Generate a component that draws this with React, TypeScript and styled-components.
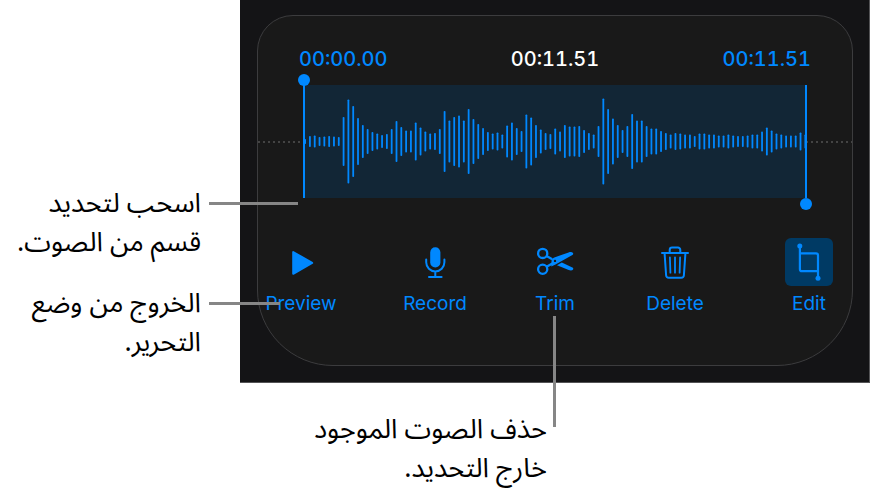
import React from "react";
import styled, { createGlobalStyle } from "styled-components";

const BLUE = "#0088ff";
const LINE = "#868686";

const GlobalStyle = createGlobalStyle`
  *, *::before, *::after { box-sizing: border-box; }
  body {
    margin: 0;
    background: #fff;
    color: #000;
    font-family: Inter, "Liberation Sans", sans-serif;
  }
`;

const Page = styled.main`
  display: grid;
  grid-template-columns: 240px minmax(0, 1fr);
`;

const SideNotes = styled.div`
  display: flex;
  flex-direction: column;
  gap: 22px;
  padding: 184px 39px 0 0;
`;

const Note = styled.p`
  position: relative;
  z-index: 1;
  margin: 0;
  font-family: "Noto Sans Arabic", "Noto Sans", "DejaVu Sans", sans-serif;
  font-size: 27px;
  line-height: 39px;
  text-align: right;
  white-space: nowrap;
`;

const SideNote = styled(Note)<{ $reach: number }>`
  &::after {
    content: "";
    position: absolute;
    top: 18px;
    left: calc(100% + 8px);
    width: ${(p) => p.$reach}px;
    height: 3px;
    background: ${LINE};
  }
`;

const BelowNote = styled(Note)`
  width: 50%;
  margin-top: 27px;
  padding-right: 8px;

  &::after {
    content: "";
    position: absolute;
    left: calc(100% - 2px);
    bottom: 61px;
    width: 3px;
    height: 111px;
    background: ${LINE};
  }
`;

const Screen = styled.section`
  padding: 15px 16px 16px 17px;
  background: #141416;
  border-right: 1px solid #545456;
  border-bottom: 1px solid #545456;
`;

const Panel = styled.div`
  padding: 31px 0 49px;
  background: #191919;
  border: 1px solid #3c3c3e;
  border-radius: 36px 36px 76px 76px;
`;

const Times = styled.div`
  display: flex;
  justify-content: space-between;
  padding: 0 41px;
  font-size: 20px;
  font-weight: 500;
  line-height: 24px;
  font-variant-numeric: tabular-nums;
`;

const Time = styled.time<{ $bright?: boolean }>`
  color: ${(p) => (p.$bright ? "#fff" : BLUE)};
`;

const WaveRow = styled.div`
  display: flex;
  align-items: center;
  height: 113px;
  margin-top: 14px;
`;

const Dots = styled.div`
  width: 46px;
  height: 2px;
  background: repeating-linear-gradient(90deg, #444 0 2px, transparent 2px 5px);
`;

const Selection = styled.div`
  position: relative;
  flex: 1;
  height: 100%;
  background: #122636;
`;

const Wave = styled.svg`
  display: block;
  width: 100%;
  height: 100%;
`;

const Handle = styled.button<{ $end?: boolean }>`
  position: absolute;
  top: 0;
  bottom: 0;
  ${(p) => (p.$end ? "right: -1px;" : "left: -1px;")}
  width: 2px;
  padding: 0;
  border: 0;
  background: ${BLUE};

  &::after {
    content: "";
    position: absolute;
    ${(p) => (p.$end ? "bottom: -12px;" : "top: -11px;")}
    left: -5px;
    width: 12px;
    height: 12px;
    border-radius: 50%;
    background: ${BLUE};
  }
`;

const Toolbar = styled.div`
  display: grid;
  grid-template-columns: 72px minmax(0, 1fr) 72px;
  column-gap: 38px;
  margin-top: 40px;
  padding: 0 7px;
`;

const MiddleTools = styled.div`
  display: grid;
  grid-template-columns: repeat(3, 1fr);
`;

const Tool = styled.button`
  display: flex;
  flex-direction: column;
  align-items: center;
  gap: 6px;
  padding: 0;
  border: 0;
  background: none;
  color: ${BLUE};
  font: inherit;
  font-size: 19px;
  line-height: 24px;
`;

const IconBox = styled.span<{ $on?: boolean }>`
  display: block;
  width: 48px;
  height: 48px;
  border-radius: 6px;
  background: ${(p) => (p.$on ? "#003a64" : "none")};

  svg { display: block; }
`;

const HEIGHTS = [
  5, 11, 12, 9, 10, 11, 10, 9, 49, 84, 71, 47, 33, 25, 19, 16, 13, 15, 25, 41,
  29, 22, 22, 38, 28, 20, 16, 17, 25, 61, 42, 49, 52, 42, 65, 45, 35, 27, 19,
  16, 18, 14, 32, 38, 27, 21, 54, 48, 33, 24, 17, 15, 26, 20, 33, 30, 30, 31,
  23, 17, 14, 31, 86, 65, 46, 33, 23, 31, 55, 42, 42, 31, 26, 26, 21, 17, 14,
  17, 16, 14, 14, 11, 16, 16, 14, 14, 12, 12, 14, 12, 11, 11, 12, 14, 14, 20,
  28, 22, 16, 14, 12, 12, 12, 18, 14,
];

const STEP = 4.81;

const Icon = ({ children }: { children: React.ReactNode }) => (
  <svg width="48" height="48" viewBox="0 0 48 48" fill="none" stroke="currentColor" strokeWidth="2" aria-hidden="true">
    {children}
  </svg>
);

const PlayIcon = () => (
  <Icon>
    <path d="M16.2 14v21.8L35.2 24.9z" fill="currentColor" strokeLinejoin="round" />
  </Icon>
);

const MicIcon = () => (
  <Icon>
    <rect x="19.2" y="9.3" width="10.2" height="20.2" rx="5.1" fill="currentColor" stroke="none" />
    <path d="M15.2 21.5v2.8a9.1 9.1 0 0 0 18.2 0v-2.8M24.3 33.4V39M18 39h12.6" strokeLinecap="round" />
  </Icon>
);

const ScissorsIcon = () => (
  <Icon>
    <g strokeWidth="2.3">
      <circle cx="11.7" cy="15.4" r="4.6" />
      <circle cx="11.7" cy="31.3" r="4.6" />
      <path d="M15.6 18l5.6 3.2M15.6 28.8l7-4" />
    </g>
    <path
      d="M20.6 22.2c.4-1.6 1.6-2.3 3.4-3L37.6 14.4c1.8-.6 3.6-.5 4.4.6.4.7.2 1.5-.6 1.9L24.5 26.6l-4.2 1.8z"
      fill="currentColor"
      stroke="none"
    />
    <path
      d="M26 27.2l4.8-2.8L41.4 29.5c.8.4 1.1 1.2.7 1.9-.8 1.1-2.6 1.3-4.4.6z"
      fill="currentColor"
      stroke="none"
    />
    <circle cx="24" cy="22.9" r="1.2" fill="#191919" stroke="none" />
  </Icon>
);

const TrashIcon = () => (
  <Icon>
    <path d="M11 15.1h26" strokeLinecap="round" />
    <path d="M18.7 15v-3a2.4 2.4 0 0 1 2.4-2.4h5.8a2.4 2.4 0 0 1 2.4 2.4v3" />
    <path d="M13.6 15.5l1.5 21.7a2.7 2.7 0 0 0 2.7 2.5h12.4a2.7 2.7 0 0 0 2.7-2.5l1.5-21.7" />
    <path d="M18.9 19.3l.5 15.4M24 19.3v15.4M29.1 19.3l-.5 15.4" strokeWidth="1.8" strokeLinecap="round" />
  </Icon>
);

const CropIcon = () => (
  <Icon>
    <circle cx="14.8" cy="8.1" r="2.5" fill="currentColor" stroke="none" />
    <circle cx="33" cy="40.2" r="2.5" fill="currentColor" stroke="none" />
    <path d="M14.9 8v23.2a2 2 0 0 0 2 2H33M15 15.4h16a2 2 0 0 1 2 2V40" strokeWidth="2.2" />
  </Icon>
);

const App = () => (
  <>
    <GlobalStyle />
    <Page>
      <SideNotes lang="ar">
        <SideNote dir="rtl" $reach={89}>
          اسحب لتحديد
          <br />
          قسم من الصوت.
        </SideNote>
        <SideNote dir="rtl" $reach={71}>
          الخروج من وضع
          <br />
          التحرير.
        </SideNote>
      </SideNotes>
      <div>
        <Screen>
          <Panel>
            <Times>
              <Time>00:00.00</Time>
              <Time $bright>00:11.51</Time>
              <Time>00:11.51</Time>
            </Times>
            <WaveRow>
              <Dots />
              <Selection>
                <Wave viewBox="0 0 502 113" preserveAspectRatio="none" aria-hidden="true">
                  {HEIGHTS.map((h, i) => (
                    <rect key={i} x={i * STEP + 0.2} y={56.5 - h / 2} width="1.8" height={h} rx="0.8" fill={BLUE} />
                  ))}
                </Wave>
                <Handle aria-label="Selection start" />
                <Handle $end aria-label="Selection end" />
              </Selection>
              <Dots />
            </WaveRow>
            <Toolbar>
              <Tool>
                <IconBox><PlayIcon /></IconBox>
                Preview
              </Tool>
              <MiddleTools>
                <Tool>
                  <IconBox><MicIcon /></IconBox>
                  Record
                </Tool>
                <Tool>
                  <IconBox><ScissorsIcon /></IconBox>
                  Trim
                </Tool>
                <Tool>
                  <IconBox><TrashIcon /></IconBox>
                  Delete
                </Tool>
              </MiddleTools>
              <Tool aria-pressed="true">
                <IconBox $on><CropIcon /></IconBox>
                Edit
              </Tool>
            </Toolbar>
          </Panel>
        </Screen>
        <BelowNote dir="rtl" lang="ar">
          حذف الصوت الموجود
          <br />
          خارج التحديد.
        </BelowNote>
      </div>
    </Page>
  </>
);

export default App;
